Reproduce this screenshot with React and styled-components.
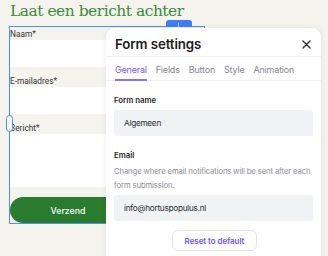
import React from 'react'
import styled, { createGlobalStyle } from 'styled-components'

const Global = createGlobalStyle`
	html, body {
		margin: 0;
		padding: 0;
		background: #f5f3ee;
		overflow: hidden;
	}
	* { box-sizing: border-box; }
`

const Page = styled.div`
	position: relative;
	width: 328px;
	height: 256px;
	padding: 1px 0 0 10px;
	background: #f5f3ee;
`

const Title = styled.h1`
	margin: 0;
	font-family: 'DejaVu Serif', 'Liberation Serif', serif;
	font-weight: 400;
	font-size: 15.5px;
	line-height: 20px;
	letter-spacing: -0.5px;
	color: #3b8b3d;
`

const Selection = styled.div`
	position: relative;
	margin: 5px 0 0 -1px;
	width: 196px;
	border: 1px solid #4f8ef7;
	display: flex;
	flex-direction: column;
`

const TopTab = styled.div`
	position: absolute;
	top: -7px;
	left: 156px;
	width: 26px;
	height: 7px;
	border-radius: 3px 3px 0 0;
	background: #3d7ff6;
	&::after {
		content: '';
		position: absolute;
		left: 12px;
		top: 3px;
		width: 1px;
		height: 4px;
		background: #a9c6fb;
	}
`

const Handle = styled.div`
	position: absolute;
	left: -4px;
	top: 88px;
	width: 7px;
	height: 17px;
	border-radius: 4px;
	border: 1.5px solid #4f8ef7;
	background: #ffffff;
`

const Label = styled.div`
	font-family: Roboto, 'Liberation Sans', sans-serif;
	font-size: 8.3px;
	line-height: 12px;
	padding-top: 1px;
	color: #333;
	margin-top: ${p => p.$gap}px;
`

const Field = styled.div`
	height: ${p => p.$h}px;
	background: #ffffff;
`

const Submit = styled.button`
	margin-top: 10px;
	width: 116px;
	height: 26px;
	border: none;
	border-radius: 13px;
	background: #2a7b2e;
	color: #fff;
	font-family: Inter, 'Noto Sans', sans-serif;
	font-size: 8.8px;
	font-weight: 500;
	padding: 0;
`

const Panel = styled.div`
	position: absolute;
	left: 106px;
	top: 28px;
	width: 215px;
	height: 240px;
	background: #fff;
	border-radius: 9px 9px 0 0;
	box-shadow: 0 0 6px rgba(0, 0, 0, 0.08);
	font-family: Inter, 'Noto Sans', sans-serif;
`

const Header = styled.div`
	height: 29px;
	display: flex;
	align-items: center;
	justify-content: space-between;
	padding: 4px 10px 0 9px;
	border-bottom: 1px solid #efeff2;
`

const HeaderTitle = styled.div`
	font-size: 13.3px;
	font-weight: 600;
	color: #1b1b22;
	letter-spacing: -0.1px;
`

const Tabs = styled.div`
	height: 24px;
	display: flex;
	gap: 9px;
	padding: 0 9px;
	border-bottom: 1px solid #efeff2;
`

const Tab = styled.div`
	display: flex;
	align-items: center;
	padding-top: 3px;
	font-size: 9px;
	letter-spacing: -0.2px;
	color: ${p => (p.$active ? '#7a5af0' : '#858591')};
	border-bottom: 2px solid ${p => (p.$active ? '#8d6ff3' : 'transparent')};
	margin-bottom: -1px;
`

const Body = styled.div`
	padding: 13px 8px 0 8px;
	display: flex;
	flex-direction: column;
`

const FieldLabel = styled.div`
	font-size: 7.8px;
	font-weight: 600;
	color: #1f1f26;
	line-height: 12px;
	margin-top: ${p => p.$gap || 0}px;
`

const Help = styled.div`
	margin-top: 4px;
	font-size: 7.7px;
	letter-spacing: -0.12px;
	line-height: 14px;
	color: #8c8c96;
`

const Input = styled.div`
	margin-top: ${p => p.$gap}px;
	height: 26px;
	border-radius: 3px;
	background: #f1f2f6;
	display: flex;
	align-items: center;
	padding-left: 10px;
	font-size: 8.2px;
	letter-spacing: -0.25px;
	color: #2a2a30;
`

const Reset = styled.button`
	align-self: center;
	margin: 9px 0 0 2px;
	width: 85px;
	height: 21px;
	border: 1px solid #e4e4ea;
	border-radius: 6px;
	background: #fff;
	font-family: Inter, 'Noto Sans', sans-serif;
	font-size: 7.9px;
	font-weight: 600;
	color: #7350e8;
	padding: 0;
`

const Close = () => (
	<svg width="9" height="9" viewBox="0 0 9 9">
		<path d="M1 1L8 8M8 1L1 8" stroke="#2b2b33" strokeWidth="1.4" strokeLinecap="round" />
	</svg>
)

export default function App() {
	return (
		<>
			<Global />
			<Page>
				<Title>Laat een bericht achter</Title>
				<Selection>
					<TopTab />
					<Handle />
					<Label $gap={0}>Naam*</Label>
					<Field $h={27} />
					<Label $gap={7}>E-mailadres*</Label>
					<Field $h={27} />
					<Label $gap={7}>Bericht*</Label>
					<Field $h={53} />
					<Submit>Verzend</Submit>
				</Selection>
				<Panel>
					<Header>
						<HeaderTitle>Form settings</HeaderTitle>
						<Close />
					</Header>
					<Tabs>
						<Tab $active>General</Tab>
						<Tab>Fields</Tab>
						<Tab>Button</Tab>
						<Tab>Style</Tab>
						<Tab>Animation</Tab>
					</Tabs>
					<Body>
						<FieldLabel>Form name</FieldLabel>
						<Input $gap={4}>Algemeen</Input>
						<FieldLabel $gap={13}>Email</FieldLabel>
						<Help>Change where email notifications will be sent after each form submission.</Help>
						<Input $gap={2}>info@hortuspopulus.nl</Input>
						<Reset>Reset to default</Reset>
					</Body>
				</Panel>
			</Page>
		</>
	)
}
